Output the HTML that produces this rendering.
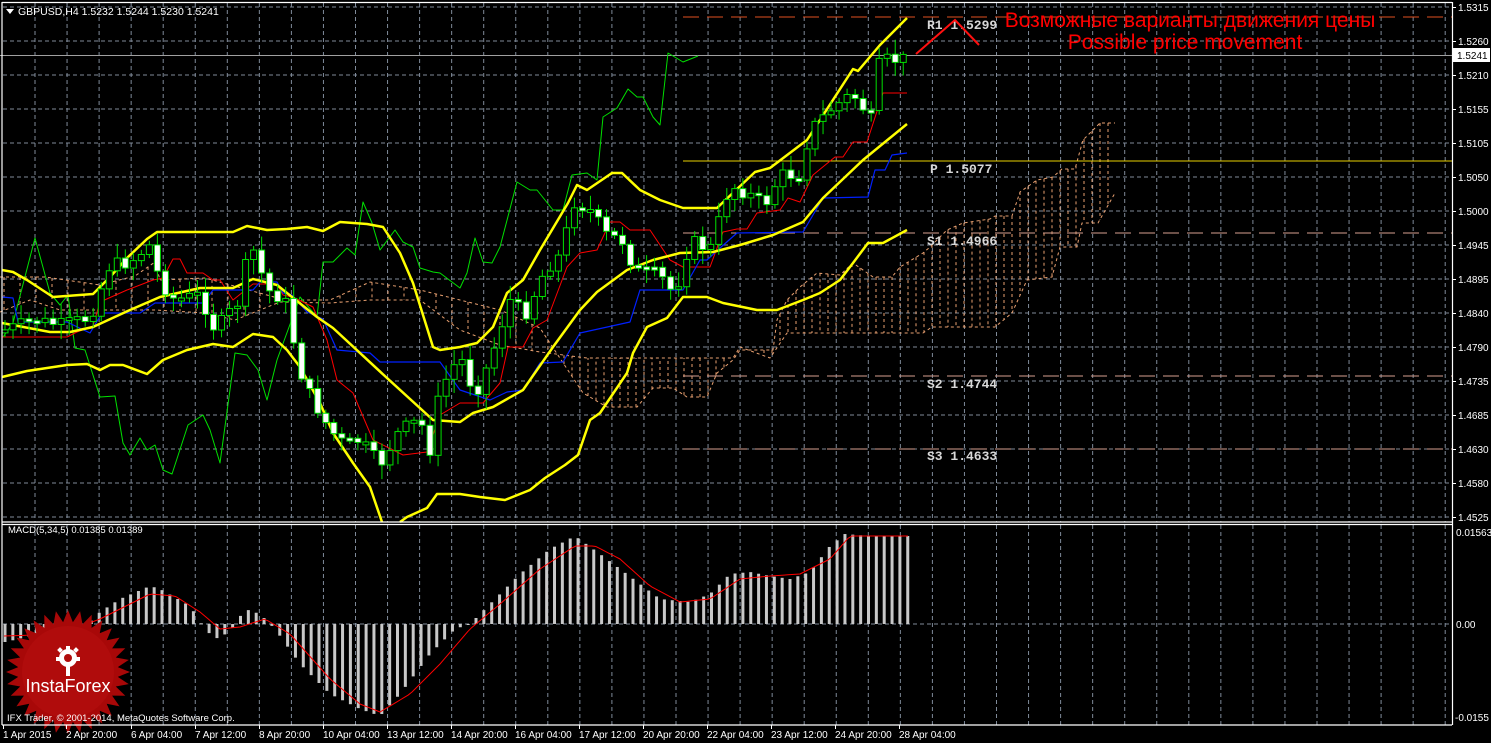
<!DOCTYPE html>
<html><head><meta charset="utf-8"><style>
html,body{margin:0;padding:0;background:#000;width:1491px;height:743px;overflow:hidden}
svg{display:block}
text{font-family:"Liberation Sans",sans-serif}
.mono text{font-family:"Liberation Mono",monospace;font-weight:bold}
</style></head><body>
<svg id="c" width="1491" height="743" viewBox="0 0 1491 743" xmlns="http://www.w3.org/2000/svg">
<rect width="1491" height="743" fill="#000"/>
<g id="grid" stroke="#7f8a99" stroke-width="1" stroke-dasharray="4,3"></g>
<g id="cloud" fill="none" stroke="#e8a070" stroke-width="1" stroke-dasharray="3,3"></g>
<g id="lv"></g>
<g id="ind" fill="none"></g>
<g id="cdl"></g>
<g id="macd"></g>
<g transform="translate(68,672)">
<polygon id="star" fill="#a80808"/>
<circle r="46" fill="#b00c0c"/>
<g fill="#fff">
<circle cx="0" cy="-14" r="9"/>
<circle cx="0" cy="-14" r="4" fill="#b00c0c"/>
<rect x="-2" y="-10" width="4" height="14"/>
<rect x="-12" y="-15" width="4" height="4"/><rect x="8" y="-15" width="4" height="4"/>
<rect x="-2" y="-26" width="4" height="4"/>
<rect x="-10" y="-24" width="4" height="4" transform="rotate(-45 -8 -22)"/>
<rect x="6" y="-24" width="4" height="4" transform="rotate(45 8 -22)"/>
</g>
<text x="0" y="20" fill="#fff" font-size="18" text-anchor="middle">InstaForex</text>
</g>
<g stroke="#fff" stroke-width="1.2" fill="none">
<line x1="2" y1="2" x2="2" y2="725"/>
<line x1="2" y1="2.5" x2="1452" y2="2.5"/>
<line x1="1452.5" y1="2" x2="1452.5" y2="725"/>
<line x1="2" y1="522" x2="1452" y2="522"/>
<line x1="2" y1="524.5" x2="1452" y2="524.5"/>
<line x1="2" y1="725" x2="1452" y2="725"/>
</g>
<polygon points="6,9 14,9 10,14" fill="#fff"/>
<text x="18" y="15" fill="#fff" font-size="10.5">GBPUSD,H4  1.5232 1.5244 1.5230 1.5241</text>
<text x="8" y="533" fill="#fff" font-size="9.5">MACD(5,34,5) 0.01385 0.01389</text>
<text x="7" y="721" fill="#fff" font-size="9.5">IFX Trader, © 2001-2014, MetaQuotes Software Corp.</text>
<g class="mono" fill="#d8d8d8" font-size="13">
<text x="927" y="29">R1 1.5299</text>
<text x="930" y="173">P 1.5077</text>
<text x="927" y="245">S1 1.4966</text>
<text x="927" y="388">S2 1.4744</text>
<text x="927" y="460">S3 1.4633</text>
</g>
<text x="1190" y="27" fill="#ff0000" font-size="21" text-anchor="middle">Возможные варианты движения цены</text>
<text x="1185" y="49" fill="#ff0000" font-size="21" text-anchor="middle">Possible price movement</text>
<polyline points="916,54 955,20 979,45" stroke="#ff1010" stroke-width="2" fill="none"/>
<g id="pax" fill="#fff" font-size="10"></g>
<rect x="1453" y="48" width="37" height="14" fill="#fff"/>
<text x="1457" y="59" fill="#000" font-size="10">1.5241</text>
<g fill="#fff" font-size="10">
<text x="1456" y="536">0.01563</text>
<text x="1456" y="628">0.00</text>
<text x="1455" y="721">-0.0155</text>
</g>
<g id="tax" fill="#fff" font-size="10"></g>
</svg>
<script>
(function(){
var NS="http://www.w3.org/2000/svg";
function el(p,t,a,txt){var e=document.createElementNS(NS,t);for(var k in a)e.setAttribute(k,a[k]);if(txt!=null)e.textContent=txt;document.getElementById(p).appendChild(e);return e;}
function pl(p,pts,col,w,extra){var a={points:pts.map(function(q){return q.join(",")}).join(" "),stroke:col,"stroke-width":w,fill:"none","stroke-linejoin":"round"};if(extra)for(var k in extra)a[k]=extra[k];return el(p,"polyline",a);}
function interp(pts,x){if(x<=pts[0][0])return pts[0][1];for(var i=1;i<pts.length;i++){if(x<=pts[i][0]){var a=pts[i-1],b=pts[i];return a[1]+(b[1]-a[1])*(x-a[0])/(b[0]-a[0]);}}return pts[pts.length-1][1];}
var k,x,y;
for(k=0;k<=15;k++){y=7+34*k;el("grid","line",{x1:3,y1:y,x2:1452,y2:y});}
el("grid","line",{x1:3,y1:624,x2:1452,y2:624});
for(x=35;x<1452;x+=32.05){el("grid","line",{x1:x,y1:3,x2:x,y2:522});el("grid","line",{x1:x,y1:525,x2:x,y2:725});}
var pv=["1.5315","1.5260","1.5210","1.5155","1.5105","1.5050","1.5000","1.4945","1.4895","1.4840","1.4790","1.4735","1.4685","1.4630","1.4580","1.4525"];
for(k=0;k<16;k++){y=7+34*k;el("pax","text",{x:1458,y:y+4},pv[k]);el("pax","rect",{x:1452,y:y,width:4,height:1});}
var tl=[[3,"1 Apr 2015"],[66,"2 Apr 20:00"],[131,"6 Apr 04:00"],[195,"7 Apr 12:00"],[259,"8 Apr 20:00"],[323,"10 Apr 04:00"],[387,"13 Apr 12:00"],[451,"14 Apr 20:00"],[515,"16 Apr 04:00"],[579,"17 Apr 12:00"],[643,"20 Apr 20:00"],[707,"22 Apr 04:00"],[771,"23 Apr 12:00"],[835,"24 Apr 20:00"],[899,"28 Apr 04:00"]];
tl.forEach(function(t){el("tax","text",{x:t[0],y:738},t[1]);el("tax","rect",{x:t[0],y:725,width:1,height:4});});
el("lv","line",{x1:0,y1:55.5,x2:1452,y2:55.5,stroke:"#a0a0a0","stroke-width":1});
el("lv","line",{x1:683,y1:17,x2:1452,y2:17,stroke:"#e05020","stroke-width":1,"stroke-dasharray":"16,8"});
el("lv","line",{x1:683,y1:161,x2:1452,y2:161,stroke:"#e8d000","stroke-width":1});
[233,376,449].forEach(function(yy){el("lv","line",{x1:683,y1:yy,x2:1452,y2:yy,stroke:"#d8a090","stroke-width":1,"stroke-dasharray":"16,8"});});
var cTop=[[0,277],[45,277],[100,285],[135,276],[155,262],[160,280],[205,278],[285,300],[330,300],[370,282],[420,290],[460,300],[500,310],[540,328],[583,393],[607,407],[637,407],[653,388],[673,388],[687,397],[707,397],[717,373],[733,360],[740,350],[773,350],[777,320],[787,300],[800,287],[817,273],[840,275],[853,263],[873,277],[892,277],[900,267],[923,253],[930,247],[947,230],[963,223],[990,219],[995,216],[1012,216],[1020,192],[1037,180],[1053,177],[1062,169],[1075,169],[1083,140],[1100,123],[1115,123]];
var cBot=[[0,312],[30,300],[60,310],[155,310],[205,313],[235,320],[280,302],[330,303],[370,300],[420,300],[460,330],[500,345],[540,352],[587,358],[733,358],[740,347],[770,358],[787,333],[923,333],[932,327],[995,327],[1012,313],[1027,280],[1052,277],[1060,247],[1077,247],[1082,223],[1098,223],[1115,193]];
pl("cloud",cTop,"#e8a070",1);
pl("cloud",cBot,"#e8a070",1);
for(x=4;x<=1115;x+=8){var ca=interp(cTop,x),cb=interp(cBot,x);if(Math.abs(ca-cb)>4&&(x>540||x%16==4))el("cloud","line",{x1:x,y1:ca,x2:x,y2:cb});}
var up=[[2,270],[13,272],[27,280],[53,297],[93,294],[110,277],[127,258],[147,239],[157,232],[233,232],[247,226],[267,230],[287,229],[307,227],[323,231],[340,222],[367,224],[383,227],[400,253],[413,283],[433,347],[440,350],[460,347],[477,343],[493,327],[507,293],[523,280],[540,250],[568,203],[577,185],[587,190],[612,173],[622,173],[640,190],[660,200],[683,208],[717,208],[755,172],[770,168],[807,140],[853,69],[858,71],[880,45],[907,18]];
var mid=[[2,323],[50,332],[70,332],[93,327],[130,310],[160,297],[200,288],[233,288],[253,279],[277,285],[317,317],[333,328],[387,378],[433,420],[460,422],[473,413],[493,407],[523,390],[553,347],[580,310],[597,292],[627,270],[653,260],[680,253],[713,252],[740,245],[773,235],[803,222],[823,198],[863,160],[907,124]];
var lo=[[2,377],[27,371],[67,365],[87,364],[100,370],[110,365],[123,365],[147,374],[163,360],[187,350],[213,344],[233,347],[253,334],[273,337],[287,350],[300,367],[320,403],[333,433],[353,463],[370,487],[382,522]];
var lo2=[[400,522],[407,517],[427,508],[437,494],[460,494],[480,497],[505,500],[530,490],[545,478],[565,465],[578,455],[590,420],[600,413],[627,373],[633,353],[647,327],[667,318],[683,297],[707,297],[723,303],[757,310],[777,310],[803,300],[820,293],[840,280],[853,263],[868,243],[883,243],[907,230]];
var red=[[2,337],[67,337],[77,332],[93,326],[100,302],[127,290],[153,280],[163,278],[173,259],[180,259],[187,273],[203,273],[213,280],[220,280],[233,300],[253,284],[277,284],[283,295],[293,297],[313,307],[327,340],[337,380],[353,393],[373,440],[403,455],[427,452],[440,415],[460,403],[483,403],[500,383],[508,347],[523,347],[533,328],[547,320],[567,267],[580,253],[597,250],[610,222],[620,222],[630,230],[650,230],[670,260],[683,267],[710,267],[723,232],[737,229],[747,229],[757,213],[780,210],[788,198],[800,202],[813,175],[835,157],[843,157],[853,142],[867,142],[883,93],[907,93]];
var blue=[[2,297],[13,298],[18,322],[67,322],[90,333],[102,313],[140,313],[155,303],[203,303],[213,290],[253,290],[260,282],[277,282],[283,293],[292,295],[307,312],[323,319],[337,350],[370,353],[380,362],[440,362],[460,390],[490,400],[507,392],[523,390],[540,363],[563,362],[580,333],[630,322],[640,290],[683,290],[700,260],[707,260],[720,248],[737,233],[803,232],[823,198],[868,197],[875,170],[885,170],[892,155],[907,153]];
var grn=[[3,337],[13,323],[35,238],[50,293],[60,305],[68,295],[75,348],[85,350],[100,397],[115,396],[123,443],[130,455],[140,438],[147,450],[155,445],[163,470],[172,474],[188,425],[203,415],[210,430],[220,463],[235,353],[247,355],[258,370],[267,400],[277,360],[300,297],[317,317],[323,262],[333,262],[347,248],[355,255],[363,202],[372,223],[380,250],[395,230],[403,242],[413,247],[420,268],[433,272],[440,273],[460,288],[467,273],[475,238],[483,262],[492,263],[500,247],[517,182],[530,190],[537,190],[553,210],[563,210],[572,175],[587,173],[597,180],[603,117],[617,108],[628,89],[637,97],[643,97],[653,117],[660,125],[668,53],[683,62],[698,56]];
pl("ind",grn,"#00e000",1);
pl("ind",red,"#ff0000",1);
pl("ind",blue,"#0020ff",1.2);
pl("ind",up,"#ffff00",2.5);pl("ind",mid,"#ffff00",2.5);pl("ind",lo,"#ffff00",2.5);pl("ind",lo2,"#ffff00",2.5);
var path=[[5,330],[35,320],[60,325],[90,318],[110,265],[130,262],[150,245],[160,282],[175,300],[200,295],[215,330],[240,300],[250,240],[260,270],[270,292],[285,300],[300,370],[310,395],[330,430],[345,445],[360,440],[380,465],[400,430],[420,420],[430,450],[440,390],[460,355],[475,395],[490,360],[510,300],[525,315],[545,270],[560,255],[575,200],[590,210],[610,240],[620,235],[635,270],[660,275],[670,290],[680,280],[690,240],[710,250],[730,185],[750,195],[765,205],[780,175],[800,175],[810,130],[830,110],[850,95],[860,100],[870,125],[880,60],[890,60],[900,60],[907,58]];
var seed=7;function rnd(){seed=(seed*9301+49297)%233280;return seed/233280;}
var prev=interp(path,1);
for(x=5;x<=907;x+=8.02){var cc=interp(path,x)+(rnd()-0.5)*14;var oo=prev;var tp=Math.min(oo,cc),bt=Math.max(oo,cc);if(bt-tp<2){bt=tp+3;}
var hi=tp-3-rnd()*12,lw=bt+3+rnd()*12;
el("cdl","line",{x1:x,y1:hi,x2:x,y2:lw,stroke:"#00e000","stroke-width":1});
var bull=cc<oo;el("cdl","rect",{x:x-3,y:tp,width:6,height:bt-tp,fill:bull?"#000":"#fff",stroke:"#00e000","stroke-width":1});prev=cc;}
var hk=[[6,-18],[30,-12],[60,-5],[80,-8],[100,12],[120,25],[150,38],[160,35],[190,18],[205,-5],[215,-15],[230,-8],[245,15],[260,10],[275,-5],[300,-40],[330,-70],[360,-85],[380,-92],[400,-70],[430,-30],[455,-5],[470,0],[490,20],[520,50],[550,75],[575,88],[600,70],[640,40],[660,25],[690,22],[710,30],[730,50],[750,52],[770,48],[790,45],[810,52],[830,78],[845,90],[870,88],[908,88]];
var sk=[[6,-12],[60,-10],[100,5],[150,30],[175,28],[200,12],[220,-5],[240,-3],[265,5],[290,-10],[330,-55],[360,-80],[380,-88],[410,-70],[440,-40],[470,-5],[500,20],[540,55],[575,78],[595,78],[620,65],[650,38],[680,22],[710,25],[740,45],[770,48],[800,50],[830,65],[850,88],[908,88]];
for(x=5;x<=908;x+=7.85){var v=interp(hk,x);el("macd","rect",{x:x-1.5,y:Math.min(624,624-v),width:3,height:Math.max(1,Math.abs(v)),fill:"#c8c8c8"});}
var sp=[];for(x=4;x<=908;x+=4)sp.push([x,624-interp(sk,x)]);pl("macd",sp,"#ff0000",1);
var s=[];for(var i=0;i<64;i++){var r=i%2?50:62;var an=i*Math.PI/32;s.push((r*Math.cos(an)).toFixed(1)+","+(r*Math.sin(an)).toFixed(1));}
document.getElementById("star").setAttribute("points",s.join(" "));
})();
</script>
</body></html>
